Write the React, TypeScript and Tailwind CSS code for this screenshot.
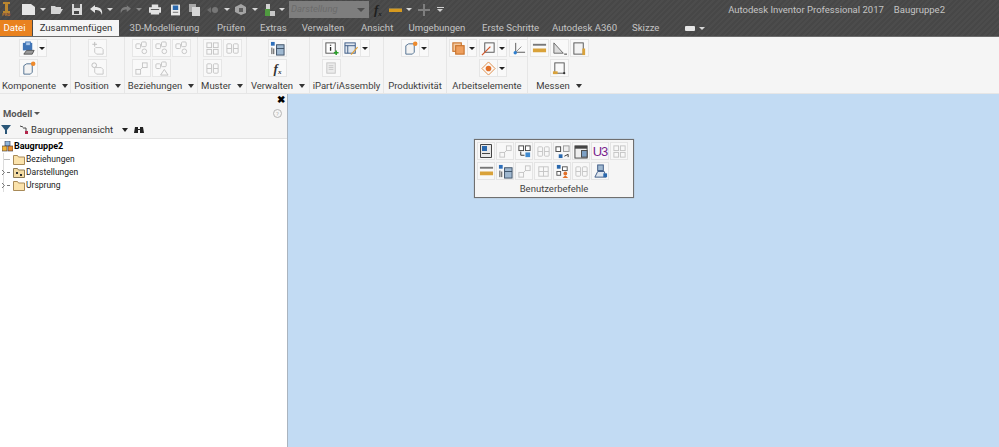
import React from 'react';

const Svg = ({ children, size = 15 }: { children: React.ReactNode; size?: number }) => (
  <svg width={size} height={size} viewBox="0 0 16 16" fill="none" className="shrink-0">
    {children}
  </svg>
);

const Caret = ({ className = '' }: { className?: string }) => (
  <span className={`inline-block h-0 w-0 border-x-[3px] border-t-[3px] border-x-transparent ${className}`} />
);

// faded two-box relation glyph, used all over the ribbon
const Boxes = ({ tone = '#c4c4c4' }: { tone?: string }) => (
  <Svg>
    <rect x="9" y="2" width="5" height="5" stroke={tone} />
    <rect x="2" y="9" width="5" height="5" stroke={tone} />
    <path d="M7 9l2-2" stroke={tone} />
  </Svg>
);

const Relation = ({ alert }: { alert?: boolean }) => (
  <Svg>
    <rect x="2" y="3" width="5" height="5" rx="1" stroke="#c4c4c4" />
    <rect x="8" y="1" width="5" height="5" rx="1" stroke="#c4c4c4" />
    {alert ? <path d="M11 9l4 6H7z" stroke="#c0c0c0" /> : <circle cx="11" cy="11" r="2.500" stroke="#c4c4c4" />}
  </Svg>
);

const Pattern = ({ tone = '#c4c4c4' }: { tone?: string }) => (
  <Svg>
    <rect x="2" y="2" width="5" height="5" stroke={tone} />
    <rect x="9" y="2" width="5" height="5" stroke={tone} />
    <rect x="2" y="9" width="5" height="5" stroke={tone} />
    <rect x="9" y="9" width="5" height="5" stroke={tone} />
  </Svg>
);

const Twin = () => (
  <Svg>
    <rect x="2" y="3" width="5" height="10" rx="1" stroke="#c4c4c4" />
    <rect x="9" y="3" width="5" height="10" rx="1" stroke="#c4c4c4" />
    <path d="M2 8h5M9 8h5" stroke="#c4c4c4" />
  </Svg>
);

const Ghost = () => (
  <Svg>
    <path d="M6 7h6l2 2v5H7l-2-2V8z" stroke="#c6c6c6" />
    <path d="M5 1v5M2.500 3.500h5" stroke="#bdbdbd" />
  </Svg>
);

const GhostCircle = () => (
  <Svg>
    <path d="M6 7h6l2 2v5H7l-2-2V8z" stroke="#c6c6c6" />
    <circle cx="4.500" cy="4.500" r="2.500" stroke="#bdbdbd" />
  </Svg>
);

const Place = () => (
  <Svg>
    <rect x="2" y="2" width="10" height="8" fill="#3f73b5" />
    <rect x="5" y="1" width="5" height="4" fill="#a8c5e8" stroke="#3f73b5" />
    <path d="M3 14l3-4h8l-2 4z" fill="#9a9a9a" stroke="#555" />
  </Svg>
);

const NewPart = () => (
  <Svg>
    <path d="M3 5l3-2h6v9l-2 2H3z" fill="#f3f3f3" stroke="#4f6f8f" />
    <circle cx="13" cy="3" r="2.400" fill="#ee8a2c" />
  </Svg>
);

const ManageBlue = () => (
  <Svg>
    <rect x="1" y="1" width="4" height="4" fill="#2e6fba" />
    <rect x="7" y="4" width="8" height="11" fill="#9fb8d0" stroke="#3c5066" />
    <path d="M2 7v7M4 8v6" stroke="#444" />
    <path d="M7 8h8" stroke="#3c5066" />
  </Svg>
);

const Fx = () => (
  <span className="font-['Liberation_Serif',serif] text-[13px] leading-none font-bold text-[#333] italic">
    f<sub className="text-[7px]">x</sub>
  </span>
);

const IPart = () => (
  <Svg>
    <rect x="2" y="2" width="10" height="11" fill="#fff" stroke="#555" />
    <path d="M7 4v1M7 6.500v4" stroke="#222" strokeWidth="1.400" />
    <path d="M13 10v5M10.500 12.500h5" stroke="#2aa02a" strokeWidth="1.600" />
  </Svg>
);

const IAssembly = () => (
  <Svg>
    <rect x="1" y="2" width="11" height="11" fill="#dfe6ef" stroke="#3c5a85" />
    <path d="M1 5h11M4 5v8" stroke="#3c5a85" />
    <path d="M7 14l7-8 1 1-7 8z" fill="#e2a23a" />
  </Svg>
);

const IAsmGhost = () => (
  <Svg>
    <rect x="3" y="2" width="9" height="11" stroke="#c6c6c6" fill="#ececec" />
    <path d="M5 5h5M5 7h5M5 9h5" stroke="#c6c6c6" />
  </Svg>
);

const Plane = () => (
  <Svg>
    <rect x="2" y="2" width="9" height="9" fill="#f2c9a0" stroke="#c9722a" strokeWidth="1.200" />
    <rect x="5" y="5" width="9" height="9" fill="#ee9f5e" stroke="#c9722a" strokeWidth="1.200" />
  </Svg>
);

const AxisIcon = () => (
  <Svg>
    <rect x="4" y="2" width="10" height="10" stroke="#555" />
    <path d="M1 15L10 6" stroke="#d2562a" strokeWidth="1.300" />
  </Svg>
);

const Ucs = () => (
  <Svg>
    <path d="M5 2v10h10" stroke="#555" />
    <path d="M5 12l6-6" stroke="#888" />
    <circle cx="4.500" cy="12.500" r="1.800" fill="#2e7fd0" />
  </Svg>
);

const PointIcon = () => (
  <Svg>
    <path d="M8 1l7 7-7 7-7-7z" stroke="#e08b43" />
    <circle cx="8" cy="8" r="3" fill="#e2712a" />
  </Svg>
);

const Dist = () => (
  <Svg>
    <rect x="1" y="3" width="14" height="2" fill="#777" />
    <rect x="1" y="8" width="14" height="4" fill="#d9a23a" />
  </Svg>
);

const Angle = () => (
  <Svg>
    <path d="M2 2l10 11H2z" fill="#dddddd" stroke="#666" />
    <path d="M13 14h3" stroke="#333" />
  </Svg>
);

const Loop = () => (
  <Svg>
    <rect x="2" y="2" width="10" height="12" stroke="#555" fill="#f3f3f3" />
    <rect x="11" y="8" width="3" height="7" fill="#d9a23a" />
  </Svg>
);

const Area = () => (
  <Svg>
    <rect x="3" y="2" width="10" height="11" stroke="#555" />
    <rect x="1" y="11" width="5" height="3" fill="#d9a23a" />
    <circle cx="13" cy="13" r="1.200" fill="#333" />
  </Svg>
);

const Btn = ({ children, drop }: { children?: React.ReactNode; drop?: boolean }) => (
  <div className="flex h-[18px]">
    <div className="flex h-[18px] w-[19px] items-center justify-center border border-[#e6e6e6] bg-[#f9f9f9]">
      {children}
    </div>
    {drop && (
      <div className="flex h-[18px] w-[9px] items-center justify-center border border-l-0 border-[#e6e6e6] bg-[#f9f9f9]">
        <Caret className="border-t-[#222]" />
      </div>
    )}
  </div>
);

const Group = ({
  label,
  arrow,
  width,
  pad,
  children,
}: {
  label: string;
  arrow?: boolean;
  width: string;
  pad: string;
  children: React.ReactNode;
}) => (
  <div className={`flex h-full shrink-0 flex-col border-r border-[#e6e6e6] ${width}`}>
    <div className={`flex h-[41px] flex-col gap-[2px] pt-[2px] ${pad}`}>{children}</div>
    <div className="flex flex-1 items-center justify-center gap-[6px] text-[9.500px] leading-none whitespace-nowrap text-[#3c3c3c]">
      <span>{label}</span>
      {arrow && <Caret className="border-x-[3.500px] border-t-[4px] border-t-[#333]" />}
    </div>
  </div>
);

const Row = ({ children, className = '' }: { children: React.ReactNode; className?: string }) => (
  <div className={`flex gap-[1px] ${className}`}>{children}</div>
);

const QatCaret = () => <Caret className="border-t-[#d8d8d8]" />;

const QuickAccess = () => (
  <div className="flex h-[19px] items-center">
    <div className="ml-[1px] flex w-[10px] flex-col items-center">
      <svg width="9" height="11" viewBox="0 0 9 11">
        <path d="M1 0h7v2H6v7h2v2H1V9h2V2H1z" fill="#b9862f" />
      </svg>
      <span className="text-[4px] leading-none font-bold text-[#c9772b]">PRO</span>
    </div>
    <svg width="13" height="11" viewBox="0 0 13 11" className="ml-[11px]">
      <path d="M0 0h9l4 3v8H0z" fill="#e6e6e6" />
    </svg>
    <span className="ml-[5px] flex">
      <QatCaret />
    </span>
    <svg width="12" height="9" viewBox="0 0 12 9" className="ml-[5px]">
      <path d="M0 1h4l1 1h5v2H3L0 9zM3 4h9L9 9H0z" fill="#d4d4d4" />
    </svg>
    <svg width="10" height="11" viewBox="0 0 10 11" className="ml-[9px]">
      <path d="M0 0h10v11H0z" fill="#d8d8d8" />
      <path d="M2 0h6v4H2z" fill="#555" />
      <path d="M2 7h5v3H2z" fill="#444" />
    </svg>
    <svg width="13" height="10" viewBox="0 0 13 10" className="ml-[8px]">
      <path d="M5 0L0 4l5 4V5c4 0 6 1 7 5 1-6-2-8-7-8z" fill="#e4e4e4" />
    </svg>
    <span className="ml-[4px] flex">
      <QatCaret />
    </span>
    <svg width="11" height="9" viewBox="0 0 13 10" className="ml-[7px]">
      <path d="M8 0l5 4-5 4V5C4 5 2 6 1 10 0 4 3 2 8 2z" fill="#7c7c7c" />
    </svg>
    <span className="ml-[5px] flex">
      <Caret className="border-t-[#8a8a8a]" />
    </span>
    <svg width="12" height="11" viewBox="0 0 13 11" className="ml-[7px]">
      <path d="M3 0h7v3h3v6h-2v2H2V9H0V3h3z" fill="#e2e2e2" />
      <path d="M2 5h9v1H2z" fill="#555" />
    </svg>
    <svg width="9" height="12" viewBox="0 0 10 12" className="ml-[10px]">
      <path d="M0 0h10v12H0z" fill="#e9e9e9" />
      <path d="M2 1h6v5H2z" fill="#2a68ad" />
      <path d="M2 8h6v1H2z" fill="#666" />
    </svg>
    <svg width="11" height="12" viewBox="0 0 11 12" className="ml-[9px]">
      <path d="M0 0h7v8H0z" fill="#a9a9a9" />
      <path d="M3 3h8v9H3z" fill="#d6d6d6" />
    </svg>
    <svg width="12" height="6" viewBox="0 0 12 6" className="ml-[7px]">
      <path d="M0 3l4-3v6z" fill="#6c6c6c" />
      <circle cx="8" cy="3" r="3" fill="#777" />
    </svg>
    <span className="ml-[5px] flex">
      <QatCaret />
    </span>
    <svg width="11" height="11" viewBox="0 0 11 11" className="ml-[5px]">
      <path d="M0 3l6-3 5 3v6l-5 2-6-3z" fill="#a4a4a4" />
      <path d="M4 4h4v4H4z" fill="#5e5e5e" />
    </svg>
    <span className="ml-[6px] flex">
      <QatCaret />
    </span>
    <svg width="12" height="12" viewBox="0 0 12 12" className="ml-[5px]">
      <path d="M2 5h5v7H2z" fill="#4f9a3f" />
      <path d="M3 0h4v5H3z" fill="#d0d0d0" />
      <path d="M7 7h5v5H7z" fill="#c8c8c8" />
    </svg>
    <span className="ml-[4px] flex">
      <QatCaret />
    </span>
    <div className="ml-[4px] flex h-[17px] w-[80px] items-center justify-between bg-[#7e7e7e] pr-[4px] pl-[2px]">
      <span className="text-[9.500px] text-[#6b6b6b] italic">Darstellung</span>
      <Caret className="border-x-[4px] border-t-[4px] border-t-[#4d4d4d]" />
    </div>
    <span className="ml-[5px] font-['Liberation_Serif',serif] text-[13px] leading-none font-bold text-[#1e1e1e] italic">
      f<sub className="text-[7px]">x</sub>
    </span>
    <span className="ml-[7px] flex h-[4px] w-[13px] border-t border-[#8d7a4a] bg-[#d79a1f]" />
    <span className="ml-[4px] flex">
      <QatCaret />
    </span>
    <svg width="12" height="12" viewBox="0 0 12 12" className="ml-[6px]">
      <path d="M5 0h2v5h5v2H7v5H5V7H0V5h5z" fill="#7e7e7e" />
    </svg>
    <span className="ml-[7px] flex flex-col items-center gap-[1px]">
      <span className="h-[1px] w-[7px] bg-[#cfcfcf]" />
      <Caret className="border-t-[#cfcfcf]" />
    </span>
    <div className="ml-auto flex gap-[10px] pr-[54px] text-[9.500px] leading-none whitespace-nowrap text-[#c4c4c4]">
      <span>Autodesk Inventor Professional 2017</span>
      <span>Baugruppe2</span>
    </div>
  </div>
);

const tabs = [
  { name: '3D-Modellierung', w: 'w-[73px]' },
  { name: 'Prüfen', w: 'w-[27px]' },
  { name: 'Extras', w: 'w-[25px]' },
  { name: 'Verwalten', w: 'w-[44px]' },
  { name: 'Ansicht', w: 'w-[31px]' },
  { name: 'Umgebungen', w: 'w-[58px]' },
  { name: 'Erste Schritte', w: 'w-[54px]' },
  { name: 'Autodesk A360', w: 'w-[64px]' },
  { name: 'Skizze', w: 'w-[26px]' },
];

const Tabs = () => (
  <div className="flex h-[17px] items-end text-[9.600px] leading-none">
    <div className="flex h-[16px] w-[32px] items-center justify-center bg-[#e9821f] pr-[3px] text-white">Datei</div>
    <div className="ml-[1px] flex h-[16px] w-[86px] items-center justify-center bg-[#f5f5f5] text-[#333]">Zusammenfügen</div>
    <div className="ml-[9px] flex h-[16px] items-center gap-[16px] text-[#c4c4c4]">
      {tabs.map((t) => (
        <span key={t.name} className={`${t.w} text-center whitespace-nowrap`}>
          {t.name}
        </span>
      ))}
    </div>
    <div className="ml-[27px] flex h-[16px] items-center gap-[3px]">
      <span className="h-[5px] w-[10px] rounded-[1px] bg-[#e6e6e6]" />
      <Caret className="ml-[1px] border-t-[#d8d8d8]" />
    </div>
  </div>
);

const Ribbon = () => (
  <div className="flex h-[57px] border-t border-[#6b6b6b] bg-[#f5f5f5]">
    <Group label="Komponente" arrow width="w-[71px]" pad="pl-[19px]">
      <Row>
        <Btn drop>
          <Place />
        </Btn>
      </Row>
      <Row>
        <Btn>
          <NewPart />
        </Btn>
      </Row>
    </Group>
    <Group label="Position" arrow width="w-[54px]" pad="pl-[17px]">
      <Row>
        <Btn>
          <Ghost />
        </Btn>
      </Row>
      <Row>
        <Btn>
          <GhostCircle />
        </Btn>
      </Row>
    </Group>
    <Group label="Beziehungen" arrow width="w-[73px]" pad="pl-[7px]">
      <Row>
        <Btn>
          <Relation />
        </Btn>
        <Btn>
          <Relation />
        </Btn>
        <Btn>
          <Relation />
        </Btn>
      </Row>
      <Row>
        <Btn>
          <Boxes />
        </Btn>
        <Btn>
          <Relation alert />
        </Btn>
      </Row>
    </Group>
    <Group label="Muster" arrow width="w-[49px]" pad="pl-[5px]">
      <Row className="gap-0">
        <Btn>
          <Pattern />
        </Btn>
        <Btn>
          <Twin />
        </Btn>
      </Row>
      <Row>
        <Btn>
          <Twin />
        </Btn>
      </Row>
    </Group>
    <Group label="Verwalten" arrow width="w-[63px]" pad="pl-[21px]">
      <Row>
        <Btn>
          <ManageBlue />
        </Btn>
      </Row>
      <Row>
        <Btn>
          <Fx />
        </Btn>
      </Row>
    </Group>
    <Group label="iPart/iAssembly" width="w-[74px]" pad="pl-[12px]">
      <Row>
        <Btn>
          <IPart />
        </Btn>
        <Btn drop>
          <IAssembly />
        </Btn>
      </Row>
      <Row>
        <Btn>
          <IAsmGhost />
        </Btn>
      </Row>
    </Group>
    <Group label="Produktivität" width="w-[63px]" pad="pl-[17px]">
      <Row>
        <Btn drop>
          <NewPart />
        </Btn>
      </Row>
    </Group>
    <Group label="Arbeitselemente" width="w-[81px]" pad="pl-[2px]">
      <Row className="gap-[2px]">
        <Btn drop>
          <Plane />
        </Btn>
        <Btn drop>
          <AxisIcon />
        </Btn>
        <Btn>
          <Ucs />
        </Btn>
      </Row>
      <Row className="pl-[30px]">
        <Btn drop>
          <PointIcon />
        </Btn>
      </Row>
    </Group>
    <div className="flex h-full w-[62px] shrink-0 flex-col">
      <div className="flex h-[41px] flex-col gap-[2px] pt-[2px] pl-[2px]">
        <Row>
          <Btn>
            <Dist />
          </Btn>
          <Btn>
            <Angle />
          </Btn>
          <Btn>
            <Loop />
          </Btn>
        </Row>
        <Row className="pl-[20px]">
          <Btn>
            <Area />
          </Btn>
        </Row>
      </div>
      <div className="flex flex-1 items-center justify-center gap-[6px] text-[9.500px] leading-none text-[#3c3c3c]">
        <span>Messen</span>
        <Caret className="border-x-[3.500px] border-t-[4px] border-t-[#333]" />
      </div>
    </div>
  </div>
);

const Folder = () => (
  <svg width="12" height="10" viewBox="0 0 12 10" className="shrink-0">
    <path d="M.5 9.500V.5h4l1 1.500h6v7.500z" fill="#fbe3ac" stroke="#a88a58" />
  </svg>
);

const TreeRow = ({ label, icon, expand }: { label: string; icon: React.ReactNode; expand?: boolean }) => (
  <div className="flex h-[13px] items-center text-[8.500px] leading-none text-[#222]">
    <span className="-ml-[3px] flex w-[12px] items-center justify-start">
      {expand ? (
        <svg width="9" height="7" viewBox="0 0 9 7">
          <path d="M1 1l2.500 2.500L1 6M6 3.500h3" stroke="#777" fill="none" />
        </svg>
      ) : (
        <span className="ml-[3px] h-[1px] w-[6px] bg-[#bbb]" />
      )}
    </span>
    {icon}
    <span className="ml-[1px]">{label}</span>
  </div>
);

const ModelPanel = () => (
  <div className="flex w-[288px] shrink-0 flex-col border-r border-[#aab4bf] bg-white">
    <div className="flex h-[45px] flex-col border-b border-[#e2e2e2] bg-[#f5f5f5]">
      <div className="flex h-[12px] justify-end pr-[2px]">
        <span className="text-[10px] leading-[12px] font-bold text-black">✖</span>
      </div>
      <div className="flex h-[16px] items-center justify-between pr-[5px] pl-[3px]">
        <span className="flex items-center gap-[2px] text-[9.500px] leading-none font-bold text-[#555]">
          Modell
          <Caret className="border-t-[#555]" />
        </span>
        <span className="flex h-[9px] w-[9px] items-center justify-center rounded-full border border-[#b5b5b5] text-[6px] leading-none text-[#b5b5b5]">?</span>
      </div>
      <div className="flex h-[17px] items-center pl-[1px] text-[9.500px] leading-none text-[#333]">
        <svg width="10" height="9" viewBox="0 0 10 9">
          <path d="M0 0h10L6 5v4H4V5z" fill="#2a5678" />
        </svg>
        <svg width="9" height="9" viewBox="0 0 9 9" className="ml-[9px]">
          <path d="M0 1l3 1M3 3h3v3" stroke="#444" fill="none" />
          <rect x="5" y="6" width="3" height="3" fill="#b3264c" />
        </svg>
        <span className="ml-[2px]">Baugruppenansicht</span>
        <Caret className="ml-[9px] border-x-[3.500px] border-t-[4px] border-t-[#222]" />
        <svg width="10" height="9" viewBox="0 0 10 9" className="ml-[6px]">
          <path d="M1 2h3v2h2V2h3l1 6H6V5H4v3H0z" fill="#222" />
        </svg>
      </div>
    </div>
    <div className="flex flex-col pt-[1px]">
      <div className="flex h-[13px] items-center pl-[2px] text-[9px] leading-none font-bold text-black">
        <svg width="11" height="11" viewBox="0 0 11 11" className="shrink-0">
          <rect x="3" y="0" width="5" height="5" fill="#8fb6dc" stroke="#334" strokeWidth=".6" />
          <rect x="0" y="5" width="5" height="5" fill="#f2b53a" stroke="#334" strokeWidth=".6" />
          <rect x="6" y="5" width="5" height="5" fill="#e98f2f" stroke="#334" strokeWidth=".6" />
        </svg>
        <span className="ml-[1px]">Baugruppe2</span>
      </div>
      <div className="ml-[3px] flex w-fit flex-col border-l border-[#dcdcdc]">
        <TreeRow label="Beziehungen" icon={<Folder />} />
        <TreeRow
          label="Darstellungen"
          expand
          icon={
            <svg width="12" height="10" viewBox="0 0 12 10" className="shrink-0">
              <path d="M.5 9.500V.5h4l1 1.500h6v7.500z" fill="#f4dca3" stroke="#8c7a55" />
              <path d="M3 4h2v2H3zM7 6h2v2H7z" fill="#333" />
            </svg>
          }
        />
        <TreeRow label="Ursprung" expand icon={<Folder />} />
      </div>
    </div>
  </div>
);

const P = ({ children }: { children?: React.ReactNode }) => (
  <div className="flex h-[18px] w-[18px] items-center justify-center border border-[#e4e4e4] bg-[#f8f8f8]">{children}</div>
);

const Palette = () => (
  <div className="absolute top-[45px] left-[474px] flex h-[59px] w-[160px] flex-col border border-[#6f6f6f] bg-[#f5f5f5] pt-[2px] pl-[2px] shadow-[0_0_1px_#999]">
    <div className="flex gap-[1px]">
      <P>
        <svg width="12" height="14" viewBox="0 0 12 14">
          <path d="M.5.5h11v13H.5z" fill="#e8e8e8" stroke="#444" />
          <path d="M2 2h5v5H2z" fill="#2a68ad" />
          <path d="M2 9h8v1H2z" fill="#444" />
        </svg>
      </P>
      <P>
        <Boxes />
      </P>
      <P>
        <svg width="15" height="15" viewBox="0 0 16 16">
          <rect x="2" y="2" width="5" height="5" stroke="#444" fill="#fff" />
          <rect x="9" y="2" width="5" height="5" stroke="#444" fill="#fff" />
          <rect x="9" y="9" width="5" height="5" fill="#3f8ad0" />
          <path d="M4 8v4h4" stroke="#333" fill="none" />
        </svg>
      </P>
      <P>
        <Twin />
      </P>
      <P>
        <svg width="15" height="15" viewBox="0 0 16 16">
          <rect x="1" y="3" width="5" height="5" stroke="#444" fill="#fff" />
          <rect x="9" y="2" width="6" height="6" stroke="#999" fill="#eee" />
          <rect x="4" y="11" width="4" height="4" fill="#2a68ad" />
          <path d="M10 13l4-2v3" stroke="#333" fill="none" />
        </svg>
      </P>
      <P>
        <svg width="15" height="15" viewBox="0 0 16 16">
          <rect x="1" y="2" width="13" height="13" fill="#eee" stroke="#444" />
          <path d="M1 2h13v3H1z" fill="#444" />
          <rect x="8" y="7" width="6" height="7" fill="#7da0c4" stroke="#444" />
        </svg>
      </P>
      <P>
        <span className="font-['Liberation_Sans',sans-serif] text-[13px] leading-none tracking-[-1px] text-[#7a1f8c]">U3</span>
      </P>
      <P>
        <Pattern />
      </P>
    </div>
    <div className="mt-[2px] flex gap-[1px]">
      <P>
        <Dist />
      </P>
      <P>
        <ManageBlue />
      </P>
      <P>
        <Boxes />
      </P>
      <P>
        <Svg>
          <rect x="3" y="3" width="10" height="10" stroke="#c4c4c4" />
          <path d="M8 3v10M3 8h10" stroke="#c4c4c4" />
        </Svg>
      </P>
      <P>
        <svg width="15" height="15" viewBox="0 0 16 16">
          <rect x="2" y="1" width="4" height="4" fill="#2a68ad" />
          <rect x="8" y="3" width="5" height="4" stroke="#555" fill="#fff" />
          <rect x="2" y="8" width="4" height="4" stroke="#555" fill="#fff" />
          <circle cx="11" cy="10" r="2" fill="#e2712a" />
          <path d="M8 15l3-3 3 3z" fill="#e2712a" />
        </svg>
      </P>
      <P>
        <Twin />
      </P>
      <P>
        <svg width="15" height="15" viewBox="0 0 16 16">
          <rect x="5" y="1" width="6" height="6" fill="#9fb8d0" stroke="#3c5a85" />
          <path d="M2 14l3-6h7l2 6z" fill="#dfe6ef" stroke="#3c5a85" />
          <rect x="11" y="10" width="4" height="4" fill="#2a68ad" />
        </svg>
      </P>
    </div>
    <div className="flex flex-1 items-center justify-center pr-[2px] text-[9.500px] leading-none text-[#444]">Benutzerbefehle</div>
  </div>
);

export default function App() {
  return (
    <div className="flex h-[447px] w-[999px] flex-col overflow-hidden bg-[#c2dbf3] font-['Roboto',sans-serif]">
      <div className="bg-[#4a4a4a] bg-[repeating-linear-gradient(135deg,#4c4c4c_0,#4c4c4c_2px,#474747_2px,#474747_4px)]">
        <QuickAccess />
        <Tabs />
      </div>
      <Ribbon />
      <div className="relative flex flex-1 border-t border-[#e6e6e6]">
        <ModelPanel />
        <Palette />
      </div>
    </div>
  );
}
